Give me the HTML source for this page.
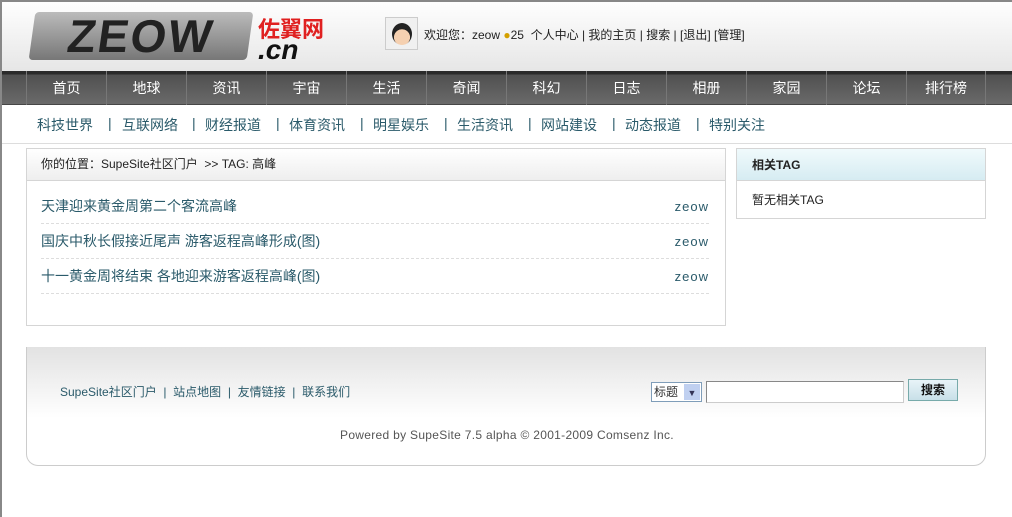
<!DOCTYPE html>
<html><head><meta charset="utf-8"><style>
*{margin:0;padding:0;box-sizing:border-box}
body{width:1012px;height:517px;overflow:hidden;background:#fff;font-family:"Liberation Sans","Noto Sans CJK SC",sans-serif;font-size:12px;color:#333;position:relative}
.abs{position:absolute}
#hd{left:0;top:0;width:1012px;height:71px;background:linear-gradient(#fff,#e6e6e6)}
#nav{left:0;top:71px;width:1012px;height:34px;background:linear-gradient(#2a2a2a 0,#2a2a2a 3px,#505050 4px,#6a6a6a 33px,#222 34px)}
#nav span{position:absolute;top:0;width:80px;height:34px;line-height:34px;text-align:center;color:#fff;font-size:14px;border-left:1px solid #777}
#sub{left:0;top:105px;width:1012px;height:39px;background:#fff;border-bottom:1px solid #ddd;font-size:14px;color:#2a5a6a}
#sub span{position:absolute;top:10px}
.box{border:1px solid #d5d5d5}
a{color:#2a5a6a;text-decoration:none}
.row{height:35px;line-height:35px;border-bottom:1px dashed #ddd;display:flex;justify-content:space-between}
</style></head><body>
<div id="hd" class="abs">
 <div class="abs" style="left:32px;top:12px;width:218px;height:48px;background:linear-gradient(#bbb,#777);border-radius:4px;font:bold 46px/48px 'Liberation Sans';color:#222;letter-spacing:2px;text-align:center;transform:skewX(-8deg)">ZEOW</div>
 <div class="abs" style="left:258px;top:12px;color:#e02020;font:bold 22px 'Noto Sans CJK SC'">佐翼网</div>
 <div class="abs" style="left:258px;top:34px;color:#111;font:italic bold 28px 'Liberation Sans'">.cn</div>
 <div class="abs" style="left:385px;top:17px;width:33px;height:33px;border:1px solid #ccc;background:#f0f0f0"><div style="margin:5px auto;width:20px;height:22px;border-radius:50%;background:radial-gradient(circle at 50% 65%,#f5d0b0 45%,#222 47%)"></div></div>
 <div class="abs" style="left:424px;top:26px;font-size:12px;color:#222">欢迎您：zeow <span style="color:#d4a000">●</span>25 &nbsp;个人中心 | 我的主页 | 搜索 | [退出] [管理]</div>
</div>
<div id="nav" class="abs">
<span style="left:26px">首页</span><span style="left:106px">地球</span><span style="left:186px">资讯</span><span style="left:266px">宇宙</span><span style="left:346px">生活</span><span style="left:426px">奇闻</span><span style="left:506px">科幻</span><span style="left:586px">日志</span><span style="left:666px">相册</span><span style="left:746px">家园</span><span style="left:826px">论坛</span><span style="left:906px;border-right:1px solid #777">排行榜</span>
</div>
<div id="sub" class="abs">
<span style="left:37px">科技世界</span>
<span style="left:108px">|</span><span style="left:122px">互联网络</span>
<span style="left:192px">|</span><span style="left:205px">财经报道</span>
<span style="left:276px">|</span><span style="left:289px">体育资讯</span>
<span style="left:360px">|</span><span style="left:373px">明星娱乐</span>
<span style="left:444px">|</span><span style="left:457px">生活资讯</span>
<span style="left:528px">|</span><span style="left:541px">网站建设</span>
<span style="left:612px">|</span><span style="left:625px">动态报道</span>
<span style="left:696px">|</span><span style="left:709px">特别关注</span>
</div>
<div class="abs box" style="left:26px;top:148px;width:700px;height:178px">
 <div style="height:32px;background:linear-gradient(#fff,#eee);border-bottom:1px solid #d5d5d5;line-height:30px;padding-left:14px;color:#222">你的位置：SupeSite社区门户 &nbsp;&gt;&gt; TAG: 高峰</div>
 <div style="margin:8px 16px 0 14px;font-size:14px">
  <div class="row"><a>天津迎来黄金周第二个客流高峰</a><a style="font-size:13px;letter-spacing:1px">zeow</a></div>
  <div class="row"><a>国庆中秋长假接近尾声 游客返程高峰形成(图)</a><a style="font-size:13px;letter-spacing:1px">zeow</a></div>
  <div class="row"><a>十一黄金周将结束 各地迎来游客返程高峰(图)</a><a style="font-size:13px;letter-spacing:1px">zeow</a></div>
 </div>
</div>
<div class="abs box" style="left:736px;top:148px;width:250px;height:71px">
 <div style="height:32px;background:linear-gradient(#f0fafc,#d6ecf2);border-bottom:1px solid #d5d5d5;line-height:32px;padding-left:15px;font-weight:bold;color:#222">相关TAG</div>
 <div style="padding:10px 15px;color:#222">暂无相关TAG</div>
</div>
<div class="abs" style="left:26px;top:347px;width:960px;height:119px;border:1px solid #ccc;border-top:none;border-radius:0 0 12px 12px;background:linear-gradient(#e2e2e2,#fff 60%)">
 <div class="abs" style="left:33px;top:36px;color:#2a5a6a">SupeSite社区门户 &nbsp;| &nbsp;站点地图 &nbsp;| &nbsp;友情链接 &nbsp;| &nbsp;联系我们</div>
 <div class="abs" style="left:624px;top:35px;width:51px;height:20px;border:1px solid #7f9db9;background:#fff;font-size:12px;line-height:18px;padding-left:2px">标题<span style="position:absolute;right:1px;top:1px;width:16px;height:16px;background:#c0d0f0;font-size:9px;text-align:center;color:#335">▼</span></div>
 <div class="abs" style="left:679px;top:34px;width:198px;height:22px;border:1px solid #888;border-right-color:#ccc;border-bottom-color:#ccc;background:#fff"></div>
 <div class="abs" style="left:881px;top:32px;width:50px;height:22px;border:1px solid #7aa;background:linear-gradient(#e8f4f8,#c8e0e8);text-align:center;line-height:20px;font-weight:bold;color:#111">搜索</div>
 <div class="abs" style="left:0;top:81px;width:960px;text-align:center;color:#555;font-size:12px;letter-spacing:0.3px">Powered by SupeSite 7.5 alpha © 2001-2009 Comsenz Inc.</div>
</div>
<div class="abs" style="left:0;top:0;width:1012px;height:517px;border-left:2px solid #888;border-top:2px solid #888;pointer-events:none"></div>
</body></html>
